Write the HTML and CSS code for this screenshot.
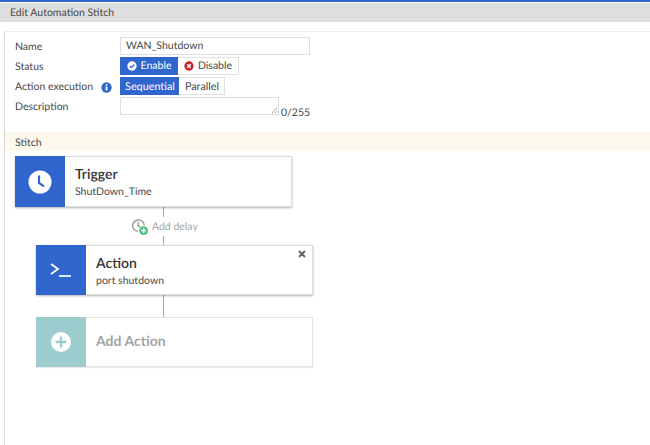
FILE: index.html
```html
<!DOCTYPE html>
<html lang="en">
<head>
<meta charset="utf-8">
<title>Edit Automation Stitch</title>
<link rel="stylesheet" href="styles.css">
</head>
<body>
<div class="topline"></div>
<header class="title">Edit Automation Stitch</header>
<main class="panel">
  <form class="form">
    <div class="row">
      <span class="label">Name</span>
      <span class="input">WAN_Shutdown</span>
    </div>
    <div class="row">
      <span class="label">Status</span>
      <span class="toggle">
        <span class="opt on opt-enable">
          <svg class="ic" viewBox="0 0 12 12"><circle cx="6" cy="6" r="5.6" fill="#fff"/><path d="M3.3 6.1 5.2 8 8.8 4.3" fill="none" stroke="#2f65cc" stroke-width="1.6"/></svg>Enable
        </span>
        <span class="opt opt-disable">
          <svg class="ic" viewBox="0 0 12 12"><circle cx="6" cy="6" r="5.6" fill="#c9252d"/><path d="M3.9 3.9 8.1 8.1M8.1 3.9 3.9 8.1" fill="none" stroke="#fff" stroke-width="1.8"/></svg>Disable
        </span>
      </span>
    </div>
    <div class="row">
      <span class="label">Action execution
        <svg class="info" viewBox="0 0 12 12"><circle cx="6" cy="6" r="5.6" fill="#2f65cc"/><rect x="5" y="5" width="2" height="4.2" fill="#fff"/><rect x="5" y="2.4" width="2" height="1.6" fill="#fff"/></svg>
      </span>
      <span class="toggle">
        <span class="opt on opt-seq">Sequential</span>
        <span class="opt opt-par">Parallel</span>
      </span>
    </div>
    <div class="row">
      <span class="label">Description</span>
      <span class="textarea">
        <svg class="grip" viewBox="0 0 8 8"><path d="M1 7 7 1M4.5 7 7 4.5" stroke="#999" stroke-width="1" fill="none"/></svg>
      </span>
      <span class="count">0/255</span>
    </div>
  </form>
  <div class="band">Stitch</div>
  <section class="flow">
    <article class="card">
      <div class="tile">
        <svg class="clock" viewBox="0 0 24 24"><circle cx="12" cy="12" r="11.5" fill="#fff"/><path d="M11 5.5V13L16 16.4" fill="none" stroke="#2f65cc" stroke-width="2.2"/></svg>
      </div>
      <div class="body">
        <div class="card-title">Trigger</div>
        <div class="card-sub">ShutDown_Time</div>
      </div>
    </article>
    <div class="delay">
      <div class="line line-a"></div>
      <div class="delay-label">
        <svg class="delay-ic" viewBox="0 0 18 18"><path d="M6.8 13.4A5.8 5.8 0 1 1 13.2 7.2" fill="none" stroke="#8f8f8f" stroke-width="1.3"/><path d="M7 3.6V7.6L9.4 9" fill="none" stroke="#8f8f8f" stroke-width="1.2"/><circle cx="12.6" cy="12.6" r="4.4" fill="#4fbf7c"/><path d="M10.2 12.6H15M12.6 10.2V15" stroke="#fff" stroke-width="1.5"/></svg>
        Add delay
      </div>
      <div class="line line-b"></div>
    </div>
    <article class="card card-action">
      <div class="tile">
        <svg class="prompt" viewBox="0 0 23 14"><path d="M1 1 8 6 1 11" fill="none" stroke="#fff" stroke-width="1.7"/><path d="M9 13H21" stroke="#fff" stroke-width="1.7"/></svg>
      </div>
      <div class="body">
        <div class="card-title">Action</div>
        <div class="card-sub">port shutdown</div>
      </div>
      <svg class="close" viewBox="0 0 8 8"><path d="M1 1 7 7M7 1 1 7" stroke="#666" stroke-width="2"/></svg>
    </article>
    <div class="line line-c"></div>
    <article class="card card-add">
      <div class="tile tile-add">
        <svg class="plus" viewBox="0 0 20 20"><circle cx="10" cy="10" r="10" fill="#fff"/><path d="M10 4.6V15.4M4.6 10H15.4" stroke="#9ccccd" stroke-width="2.4"/></svg>
      </div>
      <div class="body">
        <div class="add-title">Add Action</div>
      </div>
    </article>
  </section>
</main>
</body>
</html>
```
FILE: styles.css
```css
* { box-sizing: border-box; }
html, body { margin: 0; height: 100%; }
body {
  width: 650px;
  height: 445px;
  overflow: hidden;
  background: #fff;
  font-family: Lato, "Open Sans", sans-serif;
  font-size: 10.5px;
  text-rendering: geometricPrecision;
  color: #4a4a4a;
  display: flex;
  flex-direction: column;
}
.topline { height: 2px; background: #2f65cc; flex: none; }
.title {
  height: 19px;
  margin-top: 1px;
  padding: 0 0 0 10px;
  flex: none;
  background: #dfdfdf;
  line-height: 20px;
  color: #4a4a4a;
}
.panel {
  flex: 1;
  margin: 9px 0 0 4px;
  border-left: 1px solid #dedbd4;
  border-top: 1px solid #eeece7;
  border-top-left-radius: 2px;
  display: flex;
  flex-direction: column;
}
.form { padding: 5px 0 0 10px; height: 100px; flex: none; }
.row { display: flex; height: 20px; align-items: flex-start; }
.label {
  width: 105px;
  flex: none;
  line-height: 18px;
  margin-top: 1px;
  display: flex;
  align-items: center;
}
.info { width: 11px; height: 11px; margin-left: 8px; }
.input {
  width: 190px;
  height: 18px;
  border: 1px solid #dfdfdf;
  padding: 1px 0 0 5px;
  line-height: 15px;
}
.toggle { display: flex; height: 18px; }
.opt {
  height: 18px;
  display: flex;
  align-items: center;
  justify-content: center;
  border: 1px solid #dfdfdf;
  border-left: 0;
  padding-top: 1px;
  line-height: 15px;
}
.opt.on { background: #2f65cc; color: #fff; border: 0; }
.opt-enable { width: 58px; }
.opt-disable { width: 61px; }
.opt-seq { width: 59px; padding-left: 1px; font-size: 10.8px; }
.opt-par { width: 46px; padding-left: 1px; font-size: 10.8px; }
.ic { width: 10px; height: 10px; margin: -1px 4px 0 0; flex: none; }
.textarea {
  width: 159px;
  height: 18px;
  border: 1px solid #dfdfdf;
  position: relative;
  flex: none;
}
.grip { position: absolute; right: 0; bottom: 0; width: 7px; height: 7px; }
.count { margin: 9px 0 0 2px; line-height: 14px; }
.band {
  height: 19px;
  flex: none;
  background: #fdf8ec;
  padding-left: 10px;
  line-height: 22px;
}
.flow { padding: 5px 0 0 10px; display: flex; flex-direction: column; align-items: flex-start; }
.card {
  width: 277px;
  height: 51px;
  flex: none;
  display: flex;
  background: #fff;
  border: 1px solid #dcdcdc;
  box-shadow: 0 1px 2px rgba(0, 0, 0, .3);
  position: relative;
}
.tile {
  width: 50px;
  margin: -1px 0 -1px -1px;
  flex: none;
  background: #2f65cc;
  display: flex;
  align-items: center;
  justify-content: center;
}
.tile-add { background: #9ccccd; }
.clock { width: 24px; height: 24px; }
.prompt { width: 23px; height: 14px; }
.plus { width: 20px; height: 20px; }
.body { padding: 8px 0 0 10px; }
.card-title { font-size: 14px; line-height: 17px; color: #333; font-weight: 600; }
.card-sub { font-size: 10.5px; line-height: 14px; margin-top: 3px; }
.card-action { margin-left: 21px; height: 50px; }
.close { position: absolute; top: 4px; right: 6px; width: 8px; height: 8px; }
.delay { width: 297px; height: 38px; flex: none; display: flex; flex-direction: column; align-items: center; }
.line { width: 1px; background: #aaa; flex: none; }
.line-a { height: 10px; }
.line-b { height: 9px; }
.delay-label {
  height: 19px;
  display: flex;
  align-items: center;
  color: #a6a6a6;
  white-space: nowrap;
  width: 66px;
  margin-left: 1px;
}
.delay-ic { width: 18px; height: 18px; margin-right: 3px; flex: none; }
.line-c { height: 22px; margin-left: 148px; }
.card-add {
  margin-left: 21px;
  height: 50px;
  border-color: #e6e4df;
  box-shadow: 0 1px 1px rgba(0, 0, 0, .08);
}
.card-add .body { padding-top: 14px; }
.add-title { font-size: 14px; font-weight: 700; color: #a3a3a3; line-height: 18px; }
```
